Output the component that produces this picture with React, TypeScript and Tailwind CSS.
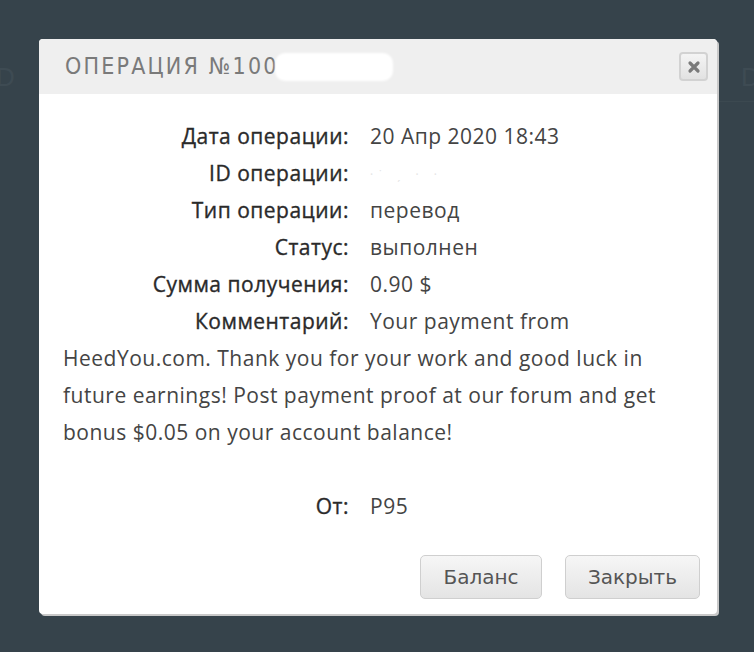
import React from 'react';

const rows: { label: string; value: React.ReactNode }[] = [
  { label: 'Дата операции:', value: '20 Апр 2020 18:43' },
  {
    label: 'ID операции:',
    value: <span className="text-[#e4e4e4] tracking-[6px] text-[12px] leading-none align-middle">·˙ ˏ · ·</span>,
  },
  { label: 'Тип операции:', value: 'перевод' },
  { label: 'Статус:', value: 'выполнен' },
  { label: 'Сумма получения:', value: '0.90 $' },
];

const Label: React.FC<{ children: React.ReactNode }> = ({ children }) => (
  <span className="inline-block w-[286px] text-right text-[#2a2a2a] [-webkit-text-stroke:0.35px_#2a2a2a] mr-[21px] align-top">
    {children}
  </span>
);

export default function App() {
  return (
    <div className="relative w-[754px] h-[652px] bg-[#36434b] overflow-hidden pt-[39px] pl-[39px]">
      {/* page behind the overlay */}
      <span className="absolute left-[-4px] top-[58px] text-[26px] text-[#3e4b53] font-['Liberation_Sans',sans-serif]">D</span>
      <span className="absolute left-[741px] top-[58px] text-[26px] text-[#3e4b53] font-['Liberation_Sans',sans-serif]">D</span>
      <div className="absolute left-[717px] right-0 top-[101px] h-px bg-[#3c4950]" />

      <div className="relative w-[678px] h-[575px] bg-white rounded-[4px] shadow-[2px_2px_0_#c9c9c9] flex flex-col overflow-hidden">
        <div className="h-[55px] bg-[#efefef] flex items-center justify-between pl-[26px] pr-[9px]">
          <div className="flex items-center">
            <span className="font-['DejaVu_Sans_Condensed','DejaVu_Sans',sans-serif] text-[23px] tracking-[2.2px] text-[#7a7a7a]">
              ОПЕРАЦИЯ №100
            </span>
            <span className="ml-[-4px] w-[118px] h-[28px] bg-white rounded-[10px] blur-[1px]" />
          </div>
          <button className="w-[29px] h-[29px] rounded-[4px] border-2 border-[#d2d2d2] bg-gradient-to-b from-[#f4f4f4] to-[#e2e2e2] flex items-center justify-center">
            <svg width="14" height="14" viewBox="0 0 14 14">
              <path d="M3 3 L11 11 M11 3 L3 11" stroke="#7a7a7a" strokeWidth="3.2" strokeLinecap="round" />
            </svg>
          </button>
        </div>

        <div className="flex-1 pt-[24px] pl-[24px] pr-[28px] font-['Open_Sans',sans-serif] text-[21px] tracking-[0.5px] leading-[37px] text-[#444]">
          {rows.map((r) => (
            <div key={r.label} className="h-[37px]">
              <Label>{r.label}</Label>
              <span>{r.value}</span>
            </div>
          ))}
          <div>
            <Label>Комментарий:</Label>
            Your payment from HeedYou.com. Thank you for your work and good luck in future earnings! Post payment proof at our
            forum and get bonus $0.05 on your account balance!
          </div>
          <div className="h-[37px]" />
          <div className="h-[37px]">
            <Label>От:</Label>
            <span>P95</span>
          </div>
        </div>

        <div className="flex justify-end gap-[23px] pr-[17px] pb-[15px] font-['DejaVu_Sans',sans-serif] text-[20px] text-[#555]">
          <button className="w-[122px] h-[44px] rounded-[5px] border border-[#cfcfcf] bg-gradient-to-b from-[#f6f6f6] to-[#e4e4e4]">
            Баланс
          </button>
          <button className="w-[135px] h-[44px] rounded-[5px] border border-[#cfcfcf] bg-gradient-to-b from-[#f6f6f6] to-[#e4e4e4]">
            Закрыть
          </button>
        </div>
      </div>
    </div>
  );
}
